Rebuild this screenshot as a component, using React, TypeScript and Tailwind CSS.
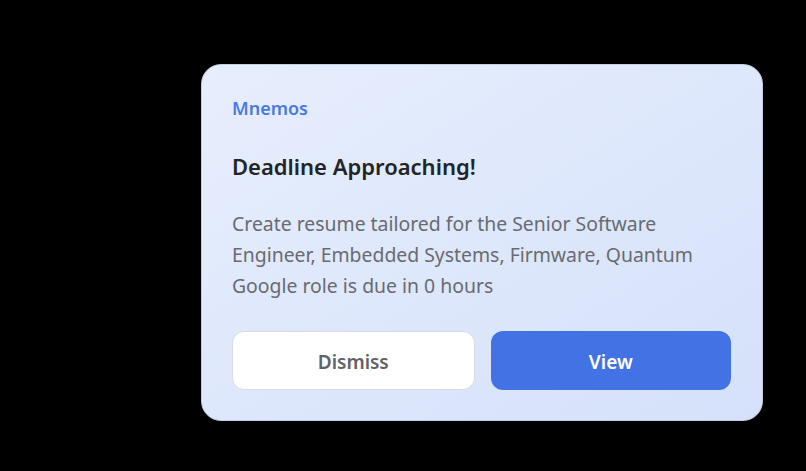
import React from 'react';

const App = () => {
  return (
    <div
      className="w-[806px] h-[471px] bg-black pt-[64px] pl-[201px]"
      style={{ fontFamily: '"Noto Sans", "Open Sans", sans-serif' }}
    >
      <div className="w-[562px] h-[357px] rounded-[20px] border border-[#c3cde3] bg-gradient-to-br from-[#e7eefd] to-[#d5e1fa] pl-[30px] pr-[31px] pt-[31px] pb-[30px] flex flex-col">
        <div className="text-[18px] leading-[25px] font-semibold text-[#4a7ae0]">Mnemos</div>
        <div className="mt-[30px] text-[22px] leading-[30px] font-semibold text-[#222428]">
          Deadline Approaching!
        </div>
        <p className="mt-[27px] text-[19.4px] leading-[31px] text-[#686b71]">
          Create resume tailored for the Senior Software Engineer, Embedded Systems, Firmware, Quantum Google role is due in 0 hours
        </p>
        <div className="mt-auto flex gap-[16px]">
          <button className="flex-1 h-[59px] pt-[3px] rounded-[12px] bg-white border border-[#d6dbe4] text-[19px] font-semibold text-[#5f6267]">
            Dismiss
          </button>
          <button className="flex-1 h-[59px] pt-[3px] rounded-[12px] bg-[#4372e4] text-[19px] font-semibold text-white">
            View
          </button>
        </div>
      </div>
    </div>
  );
};

export default App;
